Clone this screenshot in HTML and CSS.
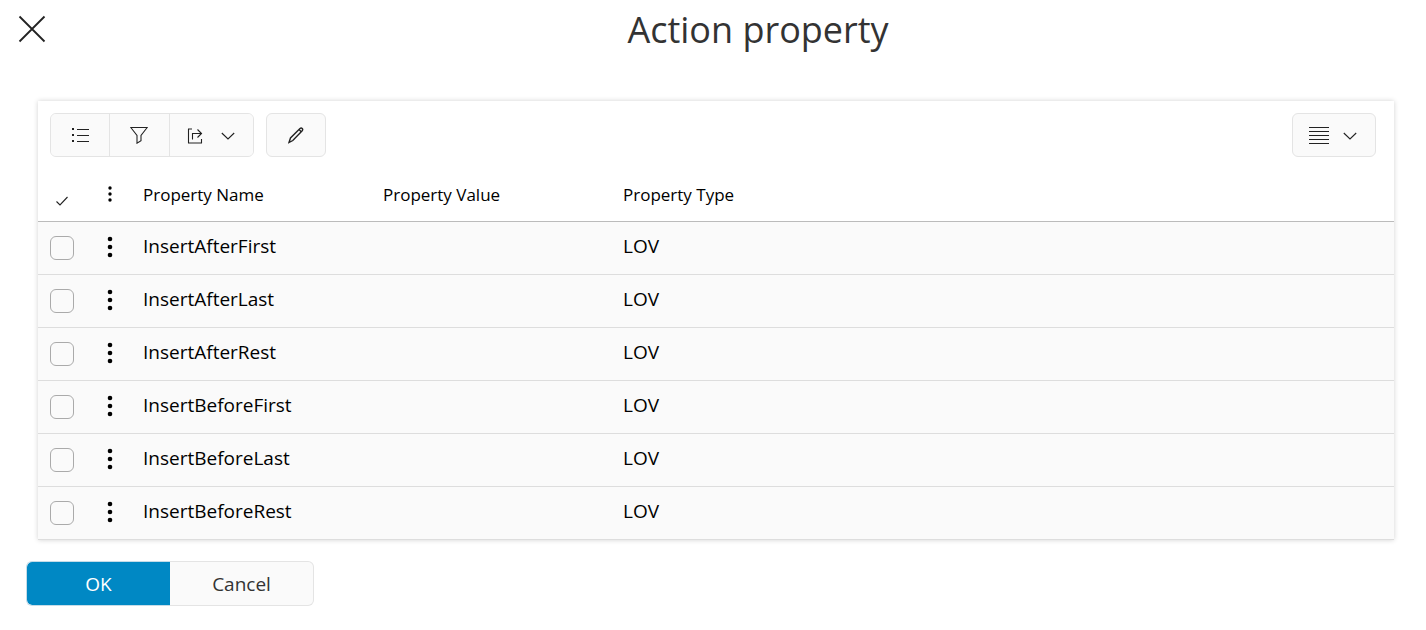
FILE: index.html
```html
<!DOCTYPE html>
<html lang="en">
<head>
<meta charset="utf-8">
<title>Action property</title>
<link rel="stylesheet" href="styles.css">
</head>
<body>
<header class="dialog-header">
  <button class="close" type="button" aria-label="Close">
    <svg width="28" height="28" viewBox="0 0 28 28"><path d="M1.5 1.5l25 25M26.5 1.5l-25 25" stroke-width="1.800"/></svg>
  </button>
  <h1 class="title">Action property</h1>
</header>
<main class="card">
  <div class="toolbar">
    <div class="group">
      <button class="tool" type="button" aria-label="List">
        <svg width="18" height="18" viewBox="0 0 18 18"><path d="M6 3.5h12M6 9.5h12M6 15.5h12"/><path d="M1 3h2M1 9h2M1 15h2" stroke-width="2"/></svg>
      </button>
      <button class="tool" type="button" aria-label="Filter">
        <svg width="18" height="18" viewBox="0 0 18 18"><path d="M.8 1.5h16.4l-6.2 8v5.300l-4 2.400V9.500z"/></svg>
      </button>
      <button class="tool tool-menu" type="button" aria-label="Export">
        <svg width="16" height="18" viewBox="0 0 16 18"><path d="M5 3H1.500v14h13V13M5.500 13.500V7.500H14M10.500 3.500l4 4-4 4"/></svg>
        <svg width="14" height="18" viewBox="0 0 14 18"><path d="M.8 7l6.200 6 6.200-6"/></svg>
      </button>
    </div>
    <button class="tool tool-single" type="button" aria-label="Edit">
      <svg width="16" height="18" viewBox="0 0 16 18"><path d="M1 16.500l1.500-4.500L12 2.500q1.200-1 2.200 0t0 2.200L4.800 14.500zM11 3.500l2.500 2.500"/></svg>
    </button>
    <button class="tool tool-single tool-view" type="button" aria-label="Row density">
      <svg width="20" height="18" viewBox="0 0 20 18"><path d="M0 1.500h20M0 5.500h20M0 9.500h20M0 13.500h20M0 17.500h20"/></svg>
      <svg width="14" height="18" viewBox="0 0 14 18"><path d="M.8 7l6.200 6 6.200-6"/></svg>
    </button>
  </div>
  <table class="grid">
    <colgroup><col class="col-icon"><col class="col-icon"><col class="col-text"><col class="col-text"><col></colgroup>
    <thead>
      <tr>
        <th class="mark" aria-label="Selected"><svg width="12" height="10" viewBox="0 0 12 10"><path d="M.5 5.500l3.500 3.500L11.500 1"/></svg></th>
        <th class="icon"><button class="dots" type="button" aria-label="Column actions"><svg width="6" height="16" viewBox="0 0 6 16"><circle cx="3" cy="2" r="1.700"/><circle cx="3" cy="8" r="1.700"/><circle cx="3" cy="14" r="1.700"/></svg></button></th>
        <th>Property Name</th><th>Property Value</th><th>Property Type</th>
      </tr>
    </thead>
    <tbody>
      <tr><td class="icon"><input class="check" type="checkbox" aria-label="Select InsertAfterFirst"></td><td class="icon"><button class="dots" type="button" aria-label="Row actions"><svg width="6" height="22" viewBox="0 0 6 22"><circle cx="3" cy="3" r="2.300"/><circle cx="3" cy="11" r="2.300"/><circle cx="3" cy="19" r="2.300"/></svg></button></td><td>InsertAfterFirst</td><td></td><td>LOV</td></tr>
      <tr><td class="icon"><input class="check" type="checkbox" aria-label="Select InsertAfterLast"></td><td class="icon"><button class="dots" type="button" aria-label="Row actions"><svg width="6" height="22" viewBox="0 0 6 22"><circle cx="3" cy="3" r="2.300"/><circle cx="3" cy="11" r="2.300"/><circle cx="3" cy="19" r="2.300"/></svg></button></td><td>InsertAfterLast</td><td></td><td>LOV</td></tr>
      <tr><td class="icon"><input class="check" type="checkbox" aria-label="Select InsertAfterRest"></td><td class="icon"><button class="dots" type="button" aria-label="Row actions"><svg width="6" height="22" viewBox="0 0 6 22"><circle cx="3" cy="3" r="2.300"/><circle cx="3" cy="11" r="2.300"/><circle cx="3" cy="19" r="2.300"/></svg></button></td><td>InsertAfterRest</td><td></td><td>LOV</td></tr>
      <tr><td class="icon"><input class="check" type="checkbox" aria-label="Select InsertBeforeFirst"></td><td class="icon"><button class="dots" type="button" aria-label="Row actions"><svg width="6" height="22" viewBox="0 0 6 22"><circle cx="3" cy="3" r="2.300"/><circle cx="3" cy="11" r="2.300"/><circle cx="3" cy="19" r="2.300"/></svg></button></td><td>InsertBeforeFirst</td><td></td><td>LOV</td></tr>
      <tr><td class="icon"><input class="check" type="checkbox" aria-label="Select InsertBeforeLast"></td><td class="icon"><button class="dots" type="button" aria-label="Row actions"><svg width="6" height="22" viewBox="0 0 6 22"><circle cx="3" cy="3" r="2.300"/><circle cx="3" cy="11" r="2.300"/><circle cx="3" cy="19" r="2.300"/></svg></button></td><td>InsertBeforeLast</td><td></td><td>LOV</td></tr>
      <tr><td class="icon"><input class="check" type="checkbox" aria-label="Select InsertBeforeRest"></td><td class="icon"><button class="dots" type="button" aria-label="Row actions"><svg width="6" height="22" viewBox="0 0 6 22"><circle cx="3" cy="3" r="2.300"/><circle cx="3" cy="11" r="2.300"/><circle cx="3" cy="19" r="2.300"/></svg></button></td><td>InsertBeforeRest</td><td></td><td>LOV</td></tr>
    </tbody>
  </table>
</main>
<footer class="actions">
  <button class="action primary" type="button">OK</button>
  <button class="action" type="button">Cancel</button>
</footer>
</body>
</html>
```
FILE: styles.css
```css
* {
  box-sizing: border-box;
}

body {
  margin: 0;
  background: #fff;
  color: #000;
  font-family: "Open Sans", "Noto Sans", sans-serif;
  font-size: 19px;
}

button {
  font: inherit;
  color: #333;
  cursor: pointer;
}

svg {
  display: block;
  fill: none;
  stroke: #222;
  stroke-width: 1.1;
}

.dialog-header {
  display: flex;
  align-items: center;
  height: 60px;
}

.close {
  width: 90px;
  padding: 0 0 2px 18px;
  border: 0;
  background: none;
}

.title {
  flex: 1;
  margin: 0;
  color: #333;
  font-size: 36px;
  font-weight: 400;
  line-height: 60px;
  text-align: center;
}

.card {
  margin: 41px 32px 0 38px;
  background: #fff;
  box-shadow: 0 0 5px rgba(0, 0, 0, 0.18);
}

.toolbar {
  display: flex;
  gap: 12px;
  padding: 12px 18px 12px 12px;
}

.group {
  display: flex;
  border: 1px solid #e4e4e4;
  border-radius: 6px;
  background: #fafafa;
  overflow: hidden;
}

.tool {
  display: flex;
  align-items: center;
  justify-content: center;
  gap: 18px;
  width: 60px;
  height: 42px;
  padding: 0 2px 0 0;
  border: 0;
  background: #fafafa;
}

.group .tool:first-child {
  width: 58px;
  padding: 0;
}

.group .tool + .tool {
  border-left: 1px solid #e4e4e4;
}

.group .tool-menu {
  width: 84px;
}

.tool-single {
  height: 44px;
  padding: 0;
  border: 1px solid #e4e4e4;
  border-radius: 6px;
}

.group + .tool-single svg {
  stroke-width: 1.4;
}

.tool-view {
  width: 84px;
  gap: 14px;
  margin-left: auto;
  padding-right: 2px;
}

.grid {
  width: 100%;
  border-collapse: separate;
  border-spacing: 0;
  table-layout: fixed;
}

.col-icon {
  width: 48px;
}

.col-text {
  width: 240px;
}

.grid th,
.grid td {
  height: 53px;
  padding: 0 9px 2px;
  border-bottom: 1px solid #ddd;
  text-align: left;
  font-weight: 400;
}

.grid th {
  border-bottom-color: #bbb;
  font-size: 17px;
}

.grid td {
  padding-bottom: 4px;
  background: #fafafa;
}

.grid .icon {
  padding: 0 12px;
}

.grid .mark {
  padding: 12px 18px 0;
}

.check {
  display: block;
  appearance: none;
  width: 24px;
  height: 24px;
  margin: 0;
  border: 1px solid #aaa;
  border-radius: 6px;
  background: #fafafa;
}

.dots {
  display: flex;
  justify-content: center;
  width: 24px;
  padding: 0 0 2px;
  border: 0;
  background: none;
}

.dots svg {
  fill: #000;
  stroke: none;
}

.actions {
  display: flex;
  padding: 21px 26px;
}

.action {
  width: 144px;
  height: 45px;
  border: 1px solid #e4e4e4;
  border-left: 0;
  border-radius: 0 6px 6px 0;
  background: #fafafa;
}

.primary {
  border: 1px solid #c5dce8;
  border-right: 0;
  border-radius: 6px 0 0 6px;
  background: #0088c4;
  background-clip: padding-box;
  color: #fff;
}
```
